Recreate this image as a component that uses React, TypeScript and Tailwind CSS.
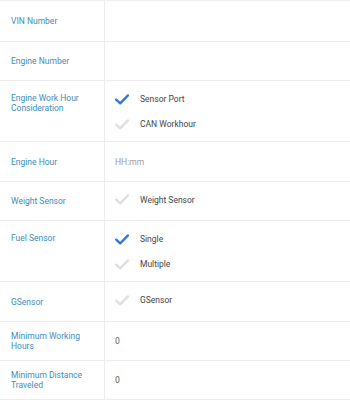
import React from "react";

type Opt = { label: string; checked: boolean };
type Row = {
  label: string;
  h: string;
  kind: "empty" | "options" | "placeholder" | "value";
  options?: Opt[];
  text?: string;
};

const rows: Row[] = [
  { label: "VIN Number", h: "h-[41px]", kind: "empty" },
  { label: "Engine Number", h: "h-[39px]", kind: "empty" },
  {
    label: "Engine Work Hour Consideration",
    h: "h-[61px]",
    kind: "options",
    options: [
      { label: "Sensor Port", checked: true },
      { label: "CAN Workhour", checked: false },
    ],
  },
  { label: "Engine Hour", h: "h-[40px]", kind: "placeholder", text: "HH:mm" },
  {
    label: "Weight Sensor",
    h: "h-[39px]",
    kind: "options",
    options: [{ label: "Weight Sensor", checked: false }],
  },
  {
    label: "Fuel Sensor",
    h: "h-[61px]",
    kind: "options",
    options: [
      { label: "Single", checked: true },
      { label: "Multiple", checked: false },
    ],
  },
  {
    label: "GSensor",
    h: "h-[40px]",
    kind: "options",
    options: [{ label: "GSensor", checked: false }],
  },
  { label: "Minimum Working Hours", h: "h-[39px]", kind: "value", text: "0" },
  { label: "Minimum Distance Traveled", h: "h-[39px]", kind: "value", text: "0" },
];

function Check({ on }: { on: boolean }) {
  return (
    <svg width="14" height="11" viewBox="0 0 14 11" className="shrink-0">
      <path
        d="M1.2 5.6 L5.2 9.4 L13 1.4"
        fill="none"
        stroke={on ? "#3474dc" : "#dedede"}
        strokeWidth="2.3"
        strokeLinecap="round"
        strokeLinejoin="round"
      />
    </svg>
  );
}

export default function App() {
  return (
    <div
      className="w-[350px] h-[402px] bg-white border-t border-[#eeeeee] overflow-hidden"
      style={{ fontFamily: "Roboto, 'Liberation Sans', sans-serif" }}
    >
      {rows.map((r, i) => {
        const multi = r.kind === "options" && (r.options?.length ?? 0) > 1;
        return (
          <div key={i} className={`flex border-b border-[#ececec] ${r.h}`}>
            <div
              className={`w-[105px] shrink-0 border-r border-[#ececec] pl-[11px] pr-[10px] flex ${
                multi ? "items-start pt-[12px]" : "items-center"
              }`}
            >
              <span className="text-[8.5px] leading-[10px] text-[#3c8dbc]">{r.label}</span>
            </div>
            <div
              className={`flex-1 pl-[10px] flex flex-col ${
                multi ? "justify-start pt-[6px] gap-[1px]" : "justify-center"
              }`}
            >
              {r.kind === "options" &&
                r.options!.map((o, j) => (
                  <div
                    key={j}
                    className={`flex items-center h-[24px] ${multi ? "" : "mb-[3px]"}`}
                  >
                    <Check on={o.checked} />
                    <span className="ml-[11px] text-[8.5px] leading-[10px] text-[#444444]">
                      {o.label}
                    </span>
                  </div>
                ))}
              {r.kind === "placeholder" && (
                <span className="text-[8.5px] leading-[10px] text-[#9a9a9a]">{r.text}</span>
              )}
              {r.kind === "value" && (
                <span className="text-[8.5px] leading-[10px] text-[#555555]">{r.text}</span>
              )}
            </div>
          </div>
        );
      })}
    </div>
  );
}
